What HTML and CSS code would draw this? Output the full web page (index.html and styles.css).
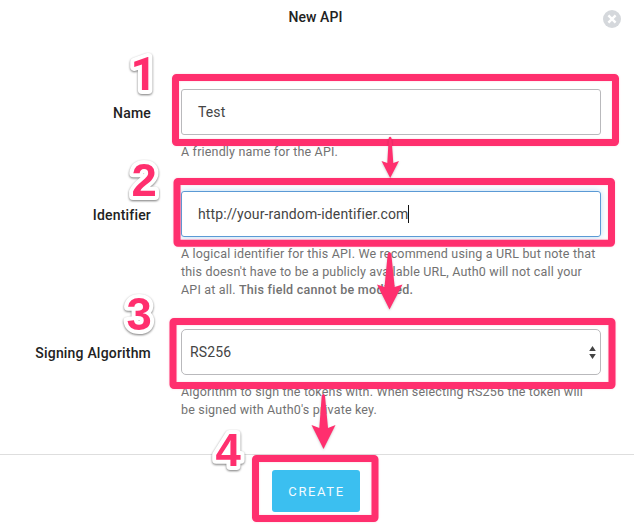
FILE: index.html
```html
<!DOCTYPE html>
<html lang="en">
<head>
<meta charset="utf-8">
<title>New API</title>
<link rel="stylesheet" href="styles.css">
</head>
<body>
<main class="dialog">
  <header class="dialog-header">
    <h1 class="title">New API</h1>
    <button class="close" aria-label="Close"><svg width="18" height="18" viewBox="0 0 18 18"><circle cx="9" cy="9" r="9"/><path d="M5.4 5.4l7.2 7.2M12.600 5.400l-7.200 7.200"/></svg></button>
  </header>
  <form class="form">
    <div class="row">
      <label class="label">Name</label>
      <div class="field">
        <div class="control"><span>Test</span></div>
        <p class="hint"><span class="line">A friendly name for the API.</span></p>
      </div>
    </div>
    <div class="row">
      <label class="label">Identifier</label>
      <div class="field">
        <div class="control focused"><span>http://your-random-identifier.com</span><i class="caret"></i></div>
        <p class="hint"><span class="line">A logical identifier for this API. We recommend using a URL but note that</span><span class="line">this doesn't have to be a publicly available URL, Auth0 will not call your</span><span class="line">API at all. <b>This field cannot be modified.</b></span></p>
      </div>
    </div>
    <div class="row">
      <label class="label">Signing Algorithm</label>
      <div class="field">
        <div class="control select"><span>RS256</span><svg class="sort" width="7" height="13" viewBox="0 0 7 13"><path d="M3.5 0L6.8 5H.2zM3.5 13L6.8 8H.2z"/></svg></div>
        <p class="hint"><span class="line">Algorithm to sign the tokens with. When selecting RS256 the token will</span><span class="line">be signed with Auth0's private key.</span></p>
      </div>
    </div>
  </form>
  <footer class="footer"><button class="create">CREATE</button></footer>
  <svg class="annotations" width="634" height="527" viewBox="0 0 634 527">
    <g class="frames">
      <rect x="175.5" y="77.5" width="440" height="65" rx="1"/>
      <rect x="177" y="181.5" width="434.5" height="61.7" rx="1"/>
      <rect x="173" y="321.5" width="439" height="64" rx="1"/>
      <rect x="255.5" y="458.5" width="119.5" height="60" rx="1"/>
    </g>
    <g class="arrows">
      <path d="M388.7 138Q390 135.500 391.500 138L393.300 163L399 161L390.200 178L381.500 161L387.300 163Z"/>
      <path d="M387.700 254Q389.500 250 391.300 254L394.700 287L402.500 284.500L389.500 309.500L377 284.500L384.500 287Z"/>
      <path d="M321.700 396Q323.300 392 325 396L328 428L335.500 425L323.500 449L311.500 425L319.300 428Z"/>
    </g>
    <g class="digits">
      <text class="one" x="130.500" y="89.500">1</text>
      <text x="131.500" y="196.300">2</text>
      <text x="126.500" y="330.300">3</text>
      <text x="215.500" y="466">4</text>
    </g>
  </svg>
</main>
</body>
</html>
```
FILE: styles.css
```css
* { box-sizing: border-box; }
body { margin: 0; background: #fff; font-family: Roboto, "Liberation Sans", sans-serif; color: #222; }
.dialog { position: relative; width: 634px; height: 527px; overflow: hidden; }
.dialog-header { display: grid; grid-template-columns: 1fr auto 1fr; height: 89px; padding: 9px 13px 0 10px; }
.title { grid-column: 2; margin: 0; font-size: 14px; line-height: 17px; font-weight: 500; letter-spacing: .05px; }
.close { justify-self: end; width: 18px; height: 18px; padding: 0; border: 0; background: none; margin-top: 1px; }
.close svg { display: block; }
.close circle { fill: #d5d8dc; }
.close path { stroke: #fff; stroke-width: 2.4; fill: none; }
.form { display: flex; flex-direction: column; gap: 30px; height: 365px; }
.row { display: grid; grid-template-columns: 151px 420px; column-gap: 30px; }
.label { justify-self: end; line-height: 48px; font-size: 14px; font-weight: 500; letter-spacing: .19px; white-space: nowrap; }
.control { display: flex; align-items: center; height: 46px; padding: 0 16px; border: 1px solid #b9b9bc; border-radius: 3px; font-size: 14px; letter-spacing: .13px; color: #444; white-space: nowrap; }
.focused { border-color: #5b9ad5; box-shadow: 0 0 7px #b9dbf5; }
.caret { width: 1px; height: 18px; background: #111; }
.select { justify-content: space-between; padding: 0 4px 0 8px; border-radius: 5px; }
.sort { fill: #444; }
.hint { margin: 8px 0 0; font-size: 12.5px; line-height: 18px; letter-spacing: .175px; color: #727272; }
.hint b { font-weight: 500; letter-spacing: .27px; }
.line { display: block; width: max-content; white-space: nowrap; }
.footer { display: flex; justify-content: center; height: 73px; padding-top: 15px; border-top: 1px solid #dedede; }
.create { width: 88px; height: 42px; padding: 0 0 0 1px; margin-right: 2px; border: 0; border-radius: 3px; background: #3bbff0; color: #f2fbff; font: 13px Roboto, sans-serif; letter-spacing: 1.6px; }
.annotations { position: absolute; inset: 0; }
.frames { fill: none; stroke: #ff2f6e; stroke-width: 7; filter: drop-shadow(0 0 1px #ff2f6e33); }
.arrows { fill: #ff2f6e; filter: drop-shadow(0 1px 1px #0003); }
.digits { font: bold 45.5px "Liberation Sans", sans-serif; fill: #ff2f6e; stroke: #fff; stroke-width: 8px; stroke-linejoin: round; paint-order: stroke; filter: drop-shadow(0 1px 1px #0008); }
.one { font-family: Roboto, sans-serif; }
```
